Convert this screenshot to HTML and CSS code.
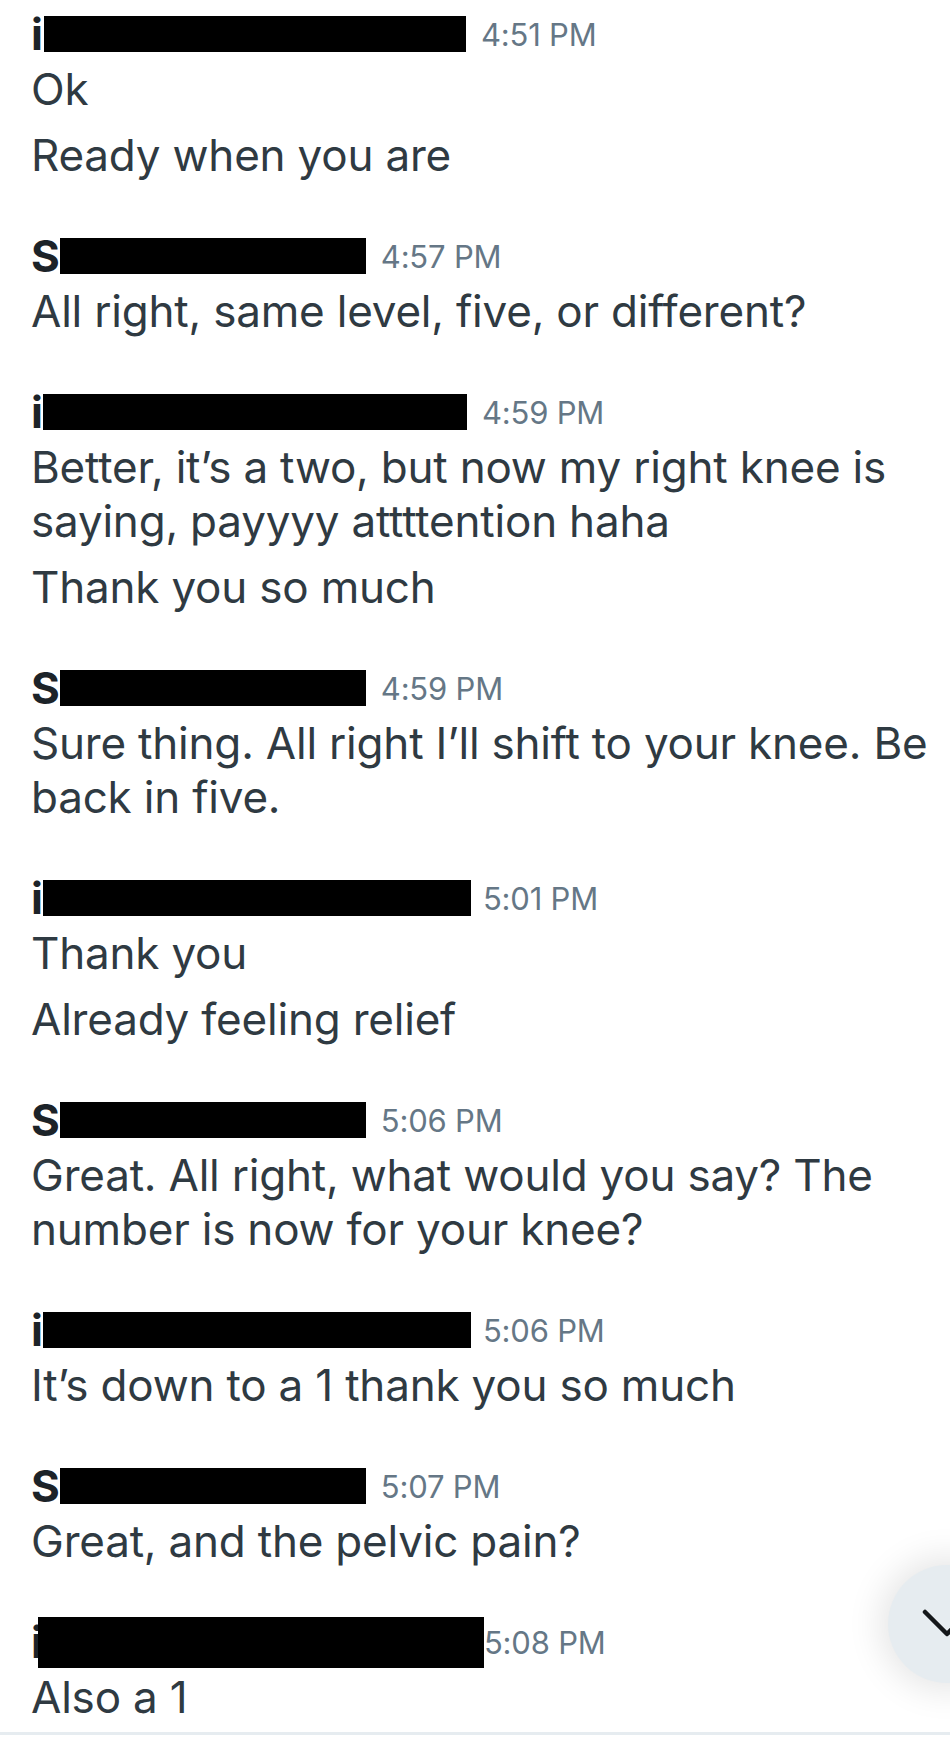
FILE: index.html
```html
<!DOCTYPE html>
<html lang="en">
<head>
<meta charset="utf-8">
<title>Conversation</title>
<link rel="stylesheet" href="styles.css">
</head>
<body>
<main class="thread">
  <section class="group">
    <div class="head"><span class="initial">i</span><span class="redact redact-i1"></span><time class="stamp">4:51 PM</time></div>
    <p class="msg">Ok</p>
    <p class="msg">Ready when you are</p>
  </section>
  <section class="group">
    <div class="head"><span class="initial">S</span><span class="redact redact-s"></span><time class="stamp">4:57 PM</time></div>
    <p class="msg">All right, same level, five, or different?</p>
  </section>
  <section class="group">
    <div class="head"><span class="initial">i</span><span class="redact redact-i3"></span><time class="stamp">4:59 PM</time></div>
    <p class="msg">Better, it’s a two, but now my right knee is saying, payyyy attttention haha</p>
    <p class="msg">Thank you so much</p>
  </section>
  <section class="group">
    <div class="head"><span class="initial">S</span><span class="redact redact-s"></span><time class="stamp">4:59 PM</time></div>
    <p class="msg">Sure thing. All right I’ll shift to your knee. Be back in five.</p>
  </section>
  <section class="group">
    <div class="head"><span class="initial">i</span><span class="redact redact-i5"></span><time class="stamp stamp-tight">5:01 PM</time></div>
    <p class="msg">Thank you</p>
    <p class="msg">Already feeling relief</p>
  </section>
  <section class="group">
    <div class="head"><span class="initial">S</span><span class="redact redact-s"></span><time class="stamp">5:06 PM</time></div>
    <p class="msg">Great. All right, what would you say? The number is now for your knee?</p>
  </section>
  <section class="group">
    <div class="head"><span class="initial">i</span><span class="redact redact-i5"></span><time class="stamp stamp-tight">5:06 PM</time></div>
    <p class="msg">It’s down to a 1 thank you so much</p>
  </section>
  <section class="group">
    <div class="head"><span class="initial">S</span><span class="redact redact-s"></span><time class="stamp">5:07 PM</time></div>
    <p class="msg">Great, and the pelvic pain?</p>
  </section>
  <section class="group">
    <div class="head"><span class="initial">i</span><span class="redact redact-i9"></span><time class="stamp stamp-flush">5:08 PM</time></div>
    <p class="msg">Also a 1</p>
  </section>
</main>
<div class="divider"></div>
<button class="jump" type="button" aria-label="Scroll to bottom">
  <svg class="jump-icon" viewBox="0 0 118 118" width="118" height="118" aria-hidden="true">
    <path d="M37 47 L59 69 L81 47" fill="none" stroke="#14171a" stroke-width="4.5" stroke-linecap="round" stroke-linejoin="round"/>
  </svg>
</button>
</body>
</html>
```

FILE: styles.css
```css
html, body {
  margin: 0;
  padding: 0;
  background: #ffffff;
}

body {
  width: 950px;
  height: 1753px;
  overflow: hidden;
  position: relative;
  font-family: Inter, "Noto Sans", "Liberation Sans", sans-serif;
  color: #2f3a42;
}

.thread {
  padding: 6px 8px 0 31px;
}

.group + .group {
  margin-top: 46px;
}

.head {
  height: 56px;
  display: flex;
  align-items: center;
}

.initial {
  font-size: 44px;
  font-weight: 700;
  line-height: 1;
  color: #1c2329;
}

.redact {
  display: inline-block;
  background: #000000;
  height: 36px;
}

.redact-i1 { width: 422px; margin-left: 1px; }
.redact-i3 { width: 424px; }
.redact-i5 { width: 428px; }
.redact-i9 { width: 446px; height: 51px; margin-left: -5px; }
.redact-s { width: 306px; }

.stamp {
  font-size: 31px;
  letter-spacing: -0.2px;
  color: #657786;
  margin-left: 15px;
  line-height: 1;
}

.stamp-tight { margin-left: 12px; }
.stamp-flush { margin-left: 0; }

.msg {
  margin: 0;
  font-size: 44px;
  letter-spacing: -0.2px;
  line-height: 54px;
  max-width: 908px;
}

.msg + .msg {
  margin-top: 12px;
}

.divider {
  margin-top: 8px;
  height: 3px;
  background: #e6ecf0;
}

.jump {
  position: absolute;
  left: 888px;
  top: 1565px;
  width: 118px;
  height: 118px;
  padding: 0;
  border: none;
  border-radius: 50%;
  background: #e6ecf0;
  box-shadow: 0 0 34px 8px rgba(0, 0, 0, 0.10);
}

.jump-icon {
  display: block;
}
```
